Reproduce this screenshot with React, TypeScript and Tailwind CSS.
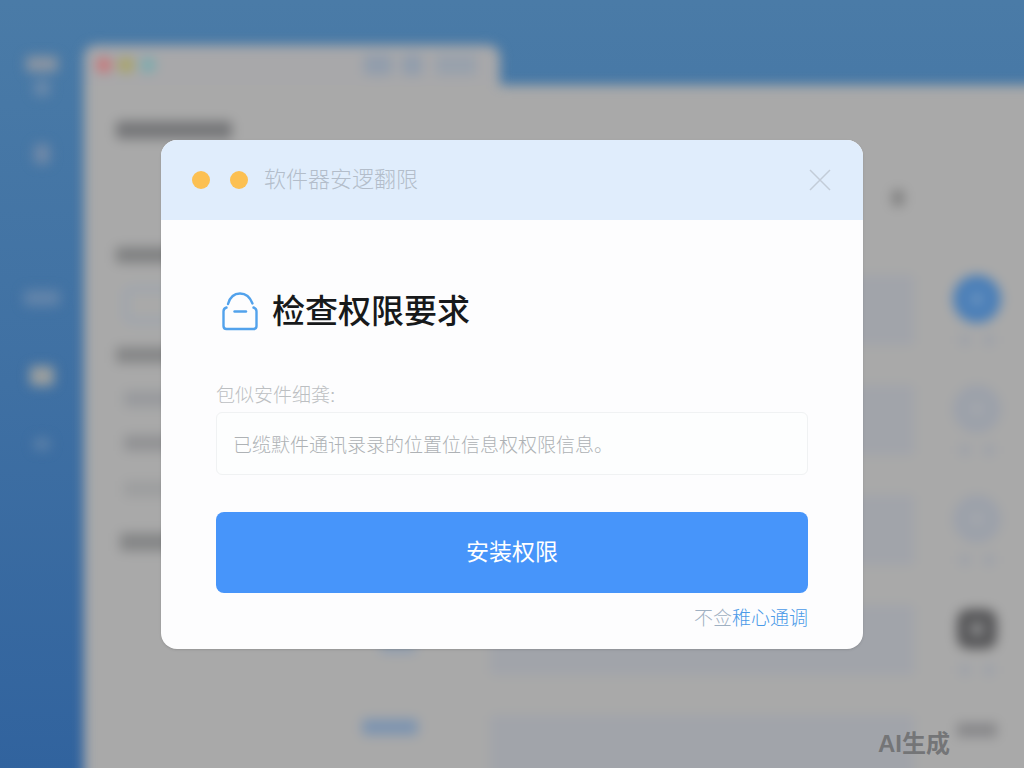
import { useState } from "react"

const sidebarItems = [
  { id: "home", box: "h-[60px] pt-1", shape: "w-8 h-4 bg-[#8a95a3]", tail: true },
  { id: "files", box: "h-[100px] pt-8", shape: "w-4 h-5 bg-[#7089a8]", tail: false },
  { id: "apps", box: "h-[84px] pt-[78px]", shape: "w-9 h-4 bg-[#6284aa]", tail: false },
  { id: "tips", box: "h-[70px] pt-[70px]", shape: "w-6 h-5 bg-[#9b9f9f]", tail: false },
  { id: "more", box: "h-[70px] pt-[72px]", shape: "w-4 h-3 bg-[#5b80a8]", tail: false },
]

const rows = [
  { id: 1, icon: "rounded-full bg-[#4b7fb8]", inner: "bg-[#6a93bf]" },
  { id: 2, icon: "rounded-full bg-[#9ca1aa]", inner: "bg-[#a5a8ac]" },
  { id: 3, icon: "rounded-full bg-[#9ca1aa]", inner: "bg-[#a5a8ac]" },
  { id: 4, icon: "rounded-2xl border-4 border-[#a9a9a9] bg-[#58585a]", inner: "bg-[#909192]" },
  { id: 5, icon: "border-t-8 border-b-[26px] border-x-4 border-[#a9a9a9] bg-[#88888a]", inner: "hidden" },
]

function LockIcon() {
  return (
    <svg
      className="w-9 h-10 shrink-0"
      viewBox="0 0 36 40"
      fill="none"
      stroke="#52a2ec"
      strokeWidth="2.4"
      strokeLinecap="round"
      strokeLinejoin="round"
      aria-hidden="true"
    >
      <path d="M6 12C8 5 12.500 1.500 18 1.500S28 5 30.500 11.500" />
      <path d="M4.500 15.500C2.500 16 1.500 17.500 1.500 19.500V34c0 2 1 3 3 3h27c2 0 3-1 3-3V19.500c0-2-1-3.500-3-4" />
      <path d="M12.500 19.500h11.500" />
    </svg>
  )
}

function CloseIcon() {
  return (
    <svg className="w-[22px] h-[22px]" viewBox="0 0 22 22" fill="none" stroke="#c3ccd8" strokeWidth="1.500" aria-hidden="true">
      <path d="M1 1l20 20M21 1L1 21" />
    </svg>
  )
}

function Desktop() {
  return (
    <div className="absolute inset-0 flex blur-[6px]" aria-hidden="true">
      <div className="w-[84px] shrink-0 pt-[52px]">
        {sidebarItems.map((item) => (
          <div key={item.id} className={`flex flex-col items-center ${item.box}`}>
            <div className={`shrink-0 rounded ${item.shape}`} />
            {item.tail && <div className="mt-2 w-4 h-4 shrink-0 rounded bg-[#6a89aa]" />}
          </div>
        ))}
      </div>

      <div className="flex-1 flex flex-col pt-[45px] -mr-6 -mb-6">
        <div className="w-[416px] h-10 flex items-center gap-[6px] pl-3 pr-6 rounded-t-xl bg-[#a8a8aa]">
          <span className="w-4 h-4 rounded-full bg-[#c8787a]" />
          <span className="w-4 h-4 rounded-full bg-[#a9a466]" />
          <span className="w-4 h-4 rounded-full bg-[#7cabae]" />
          <span className="ml-auto w-7 h-5 bg-[#919dac]" />
          <span className="ml-1 w-5 h-5 bg-[#919dac]" />
          <span className="ml-2 w-10 h-5 bg-[#98a1ac]" />
        </div>

        <div className="flex-1 flex bg-[#a9a9a9]">
          <div className="w-[406px] shrink-0 flex flex-col items-start pl-8 pt-9">
            <div className="w-[116px] h-[18px] rounded bg-[#77787a]" />
            <div className="mt-[108px] w-20 h-4 bg-[#808182]" />
            <div className="mt-6 ml-2 w-12 h-9 rounded-lg border-4 border-[#98a3b1]" />
            <div className="mt-6 w-20 h-4 bg-[#858687]" />
            <div className="mt-7 ml-2 w-16 h-4 bg-[#989a9d]" />
            <div className="mt-7 ml-2 w-16 h-4 bg-[#919294]" />
            <div className="mt-[30px] ml-2 w-16 h-4 bg-[#9d9e9f]" />
            <div className="mt-9 ml-1 w-20 h-[18px] bg-[#858687]" />
            <div className="mt-[90px] ml-[264px] w-9 h-3 rounded bg-[#8f9db0]" />
            <div className="mt-[66px] ml-[246px] w-14 h-4 rounded bg-[#7d94b0]" />
          </div>

          <div className="flex-1 flex flex-col">
            <div className="h-[190px] flex justify-end items-center pr-[144px] pt-9">
              <span className="w-3 h-4 rounded bg-[#808080]" />
            </div>
            <div className="flex flex-col gap-10">
              {rows.map((row) => (
                <div key={row.id} className="h-[70px] flex justify-between">
                  <div className="flex-1 rounded bg-[#a1a4aa]" />
                  <div className="w-[134px] shrink-0 flex flex-col items-center pr-2">
                    <div className={`w-12 h-12 flex items-center justify-center ${row.icon}`}>
                      <span className={`w-3 h-3 rounded ${row.inner}`} />
                    </div>
                    <div className="mt-3 flex gap-3">
                      <span className="w-3 h-[10px] bg-[#9da1a9]" />
                      <span className="w-3 h-[10px] bg-[#9da1a9]" />
                    </div>
                  </div>
                </div>
              ))}
            </div>
          </div>
        </div>
      </div>
    </div>
  )
}

export default function App() {
  const [open, setOpen] = useState(true)
  const [scope, setScope] = useState("已缆默件通讯录录的位置位信息权权限信息。")

  return (
    <div className="relative min-h-screen overflow-hidden bg-linear-to-b from-[#4a7ba7] via-[#3f70a3] to-[#31639e] font-['Liberation_Sans','Noto_Sans_CJK_SC',sans-serif]">
      <Desktop />

      {open && (
        <div className="relative min-h-screen flex items-center justify-center px-4 pt-[21px]">
          <div
            role="dialog"
            aria-labelledby="dialog-title"
            className="w-full max-w-[702px] rounded-2xl overflow-hidden bg-[#fdfdfe] shadow-sm"
          >
            <div className="h-20 flex items-center pl-[31px] pr-8 bg-[#e0edfc]">
              <span className="w-[18px] h-[18px] rounded-full bg-[#fcc052]" />
              <span className="ml-5 w-[18px] h-[18px] rounded-full bg-[#fcc052]" />
              <span className="ml-4 text-[22px] leading-8 font-light text-[#b3bdca]">软件器安逻翻限</span>
              <button type="button" aria-label="关闭" onClick={() => setOpen(false)} className="ml-auto cursor-pointer">
                <CloseIcon />
              </button>
            </div>

            <form className="px-[55px] pt-[67px] pb-4" onSubmit={(e) => e.preventDefault()}>
              <div className="flex items-center gap-[14px] pl-[6px]">
                <LockIcon />
                <h1 id="dialog-title" className="text-[33px] leading-[50px] font-medium text-[#17191b]">
                  检查权限要求
                </h1>
              </div>

              <label htmlFor="scope" className="block mt-[45px] text-[19px] leading-7 font-light text-[#bcbfc2]">
                包似安件细龚:
              </label>
              <input
                id="scope"
                type="text"
                value={scope}
                onChange={(e) => setScope(e.target.value)}
                className="mt-[2px] w-full h-[63px] px-4 rounded-md border border-[#f0f2f3] bg-[#fdfefe] text-[19px] font-light text-[#aeb2b5] outline-none"
              />

              <button
                type="submit"
                className="mt-[37px] w-full h-[81px] block rounded-lg bg-[#4795fa] text-[23px] text-white cursor-pointer"
              >
                安装权限
              </button>

              <div className="mt-3 text-right">
                <a href="#skip" className="text-[19px] leading-7 font-light text-[#4a9ae8]">
                  <span className="text-[#9fb0c2]">不佥</span>稚心通调
                </a>
              </div>
            </form>
          </div>
        </div>
      )}

      <span className="absolute right-[74px] bottom-2 text-[24px] leading-8 font-bold text-[#747577]">AI生成</span>
    </div>
  )
}
